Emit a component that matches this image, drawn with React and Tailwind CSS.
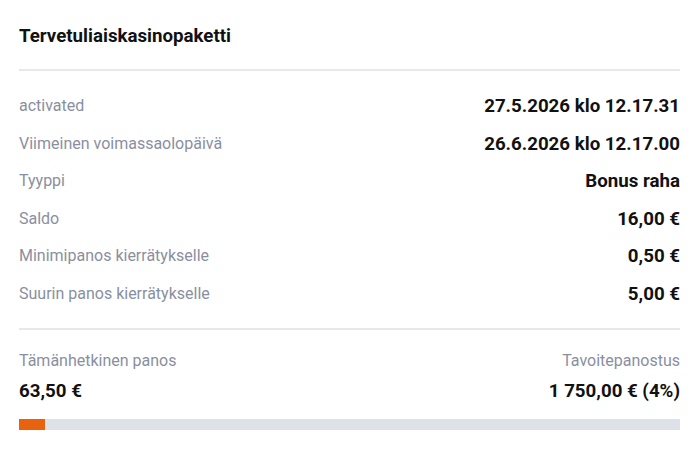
export default function App() {
  const rows = [
    ["activated", "27.5.2026 klo 12.17.31"],
    ["Viimeinen voimassaolopäivä", "26.6.2026 klo 12.17.00"],
    ["Tyyppi", "Bonus raha"],
    ["Saldo", "16,00 €"],
    ["Minimipanos kierrätykselle", "0,50 €"],
    ["Suurin panos kierrätykselle", "5,00 €"],
  ];
  return (
    <div className="w-[700px] h-[451px] bg-white pl-[19px] pr-[20px] font-['Roboto',sans-serif]">
      <div className="pt-[24px] pb-[21px] text-[18.7px] leading-[24px] font-bold text-[#111]">
        Tervetuliaiskasinopaketti
      </div>
      <div className="h-[2px] bg-[#e6e8ee]" />
      <div className="pt-[23px] flex flex-col gap-[13.6px]">
        {rows.map(([l, v]) => (
          <div key={l} className="flex justify-between items-center h-[24px]">
            <span className="text-[16px] text-[#8a8fa0]">{l}</span>
            <span className="text-[18.7px] font-bold text-[#111]">{v}</span>
          </div>
        ))}
      </div>
      <div className="h-[2px] bg-[#e6e8ee] mt-[22px]" />
      <div className="pt-[19px] flex justify-between">
        <div className="flex flex-col gap-[6px]">
          <span className="text-[16px] leading-[24px] text-[#8a8fa0]">Tämänhetkinen panos</span>
          <span className="text-[18.7px] leading-[24px] font-bold text-[#111]">63,50 €</span>
        </div>
        <div className="flex flex-col gap-[6px] items-end">
          <span className="text-[16px] leading-[24px] text-[#8a8fa0]">Tavoitepanostus</span>
          <span className="text-[18.7px] leading-[24px] font-bold text-[#111]">1 750,00 € (4%)</span>
        </div>
      </div>
      <div className="mt-[16px] h-[11px] bg-[#dfe1e8] flex">
        <div className="h-full bg-[#e8620f]" style={{ width: "4%" }} />
      </div>
    </div>
  );
}
